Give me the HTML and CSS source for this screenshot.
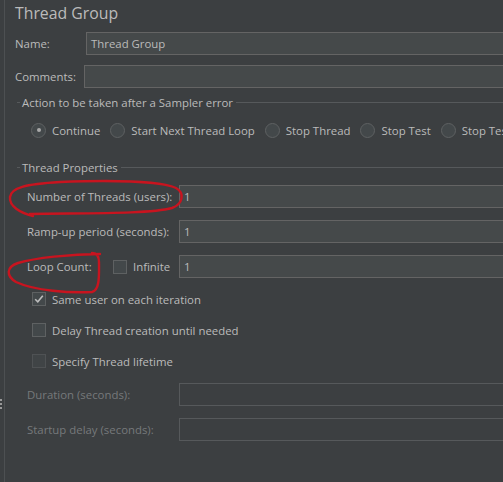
FILE: index.html
```html
<!DOCTYPE html>
<html>
<head>
<meta charset="utf-8">
<link rel="stylesheet" href="styles.css">
</head>
<body>
<div class="screen">
  <div class="divider"><span class="grip"></span></div>
  <div class="panel">
    <h1 class="title">Thread Group</h1>
    <div class="field field-name"><label class="flabel">Name:</label><div class="input">Thread Group</div></div>
    <div class="field field-comments"><label class="flabel">Comments:</label><div class="input"></div></div>

    <section class="group">
      <div class="group-title"><span>Action to be taken after a Sampler error</span></div>
      <div class="radios">
        <span class="opt"><span class="radio on"></span>Continue</span>
        <span class="opt"><span class="radio"></span>Start Next Thread Loop</span>
        <span class="opt"><span class="radio"></span>Stop Thread</span>
        <span class="opt"><span class="radio"></span>Stop Test</span>
        <span class="opt"><span class="radio"></span>Stop Test Now</span>
      </div>
    </section>

    <section class="group group-props">
      <div class="group-title"><span>Thread Properties</span></div>
      <div class="prow prow-first"><label class="plabel">Number of Threads (users):</label><div class="input">1</div></div>
      <div class="prow"><label class="plabel">Ramp-up period (seconds):</label><div class="input">1</div></div>
      <div class="prow"><label class="plabel plabel-loop">Loop Count:</label><span class="inf"><span class="check"></span>Infinite</span><div class="input">1</div></div>
      <div class="crow crow-first"><span class="check checked"><svg viewBox="0 0 14 14" width="14" height="14"><path d="M3.2 7.2 L5.8 9.8 L10.8 3.8" fill="none" stroke="#bdbdbd" stroke-width="1.6"/></svg></span>Same user on each iteration</div>
      <div class="crow"><span class="check"></span>Delay Thread creation until needed</div>
      <div class="crow"><span class="check dim"></span>Specify Thread lifetime</div>
      <div class="prow prow-dur disabled"><label class="plabel">Duration (seconds):</label><div class="input off"></div></div>
      <div class="prow disabled"><label class="plabel">Startup delay (seconds):</label><div class="input off"></div></div>
    </section>
  </div>
  <svg class="marks" width="503" height="482" viewBox="0 0 503 482">
    <path d="M33 216 C20 213 9 206 10 197 C11 188 25 184 60 182 C110 180 160 181 176 188 C185 193 183 204 172 208 C150 214 90 213 30 214" fill="none" stroke="#c8141f" stroke-width="2.4" stroke-linecap="round"/>
    <path d="M100 254 C70 254 35 258 18 263 C6 267 6 276 16 282 C35 291 70 293 92 292 C100 290 99 275 99 262 C99 256 97 253 92 253" fill="none" stroke="#c8141f" stroke-width="2.4" stroke-linecap="round"/>
  </svg>
</div>
</body>
</html>
```
FILE: styles.css
```css
html, body {
  margin: 0;
  padding: 0;
  background: #3c3f41;
  overflow: hidden;
}
.screen {
  position: relative;
  width: 503px;
  height: 482px;
  display: flex;
  overflow: hidden;
  font-family: "Open Sans", "Noto Sans", sans-serif;
  font-size: 11.4px;
  color: #bbbbbb;
  white-space: nowrap;
}
.divider {
  width: 4px;
  border-right: 1px solid #4d5052;
  position: relative;
  flex: none;
}
.grip {
  position: absolute;
  left: 0;
  top: 399px;
  width: 2px;
  height: 2px;
  background: #9a9a9a;
  box-shadow: 0 4px 0 #9a9a9a, 0 8px 0 #9a9a9a;
}
.panel {
  flex: 1;
  padding-left: 10px;
  min-width: 0;
}
.title {
  margin: 2px 0 0;
  height: 22px;
  line-height: 22px;
  font-size: 15.8px;
  font-weight: normal;
  color: #bbbbbb;
}
.field {
  display: flex;
  align-items: center;
  margin-top: 8px;
}
.field-comments { margin-top: 10px; }
.flabel { width: 71px; flex: none; }
.field-comments .flabel { width: 69px; }
.input {
  flex: 1;
  height: 21px;
  line-height: 21px;
  background: #45494a;
  border-top: 1px solid #646464;
  border-bottom: 1px solid #646464;
  border-left: 1px solid #646464;
  padding-left: 4px;
  margin-right: -20px;
  color: #bbbbbb;
}
.input.off {
  background: transparent;
  border-color: #56595b;
}
.group {
  margin-left: 2px;
  margin-top: 6px;
}
.group-props { margin-top: 19px; }
.group-title {
  display: flex;
  align-items: center;
  height: 16px;
}
.group-title::before {
  content: "";
  width: 3px;
  border-top: 1px solid #56595b;
}
.group-title::after {
  content: "";
  flex: 1;
  border-top: 1px solid #56595b;
  margin-right: -20px;
}
.group-title span { padding: 0 3px 0 2px; }
.radios {
  display: flex;
  align-items: center;
  height: 20px;
  margin-top: 10px;
  padding-left: 14px;
  gap: 10px;
}
.opt {
  display: flex;
  align-items: center;
  gap: 6px;
}
.radio {
  width: 13px;
  height: 13px;
  border: 1px solid #5e6162;
  border-radius: 50%;
  background: #43484a;
  position: relative;
  flex: none;
  box-sizing: border-box;
  width: 15px;
  height: 15px;
}
.radio.on::after {
  content: "";
  position: absolute;
  left: 4.5px;
  top: 4.5px;
  width: 4px;
  height: 4px;
  border-radius: 50%;
  background: #a9a9a9;
}
.prow {
  display: flex;
  align-items: center;
  margin-top: 12px;
  padding-left: 10px;
}
.prow-first { margin-top: 10px; }
.plabel { width: 152px; flex: none; }
.plabel-loop { width: 86px; }
.inf {
  width: 66px;
  flex: none;
  display: flex;
  align-items: center;
  gap: 6px;
}
.check {
  border: 1px solid #5e6162;
  background: #43484a;
  flex: none;
  display: block;
  box-sizing: border-box;
  width: 14px;
  height: 14px;
}
.check svg { display: block; margin: -1px; }
.check.dim { border-color: #4f5254; background: #404446; }
.crow {
  display: flex;
  align-items: center;
  gap: 6px;
  height: 20px;
  margin-top: 11px;
  padding-left: 15px;
}
.crow-first { margin-top: 11px; }
.prow-dur { margin-top: 12px; }
.disabled .plabel { color: #76797b; }
.marks {
  position: absolute;
  left: 0;
  top: 0;
  pointer-events: none;
}
```
